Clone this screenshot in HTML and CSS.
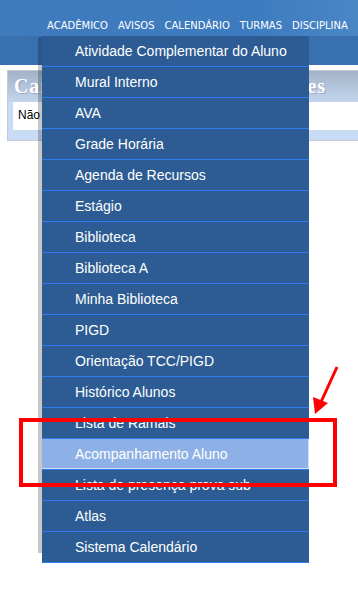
FILE: index.html
```html
<!DOCTYPE html>
<html lang="pt-BR">
<head>
    <meta charset="UTF-8">
    <meta name="viewport" content="width=device-width, initial-scale=1.0">
    <title>Portal Acadêmico</title>
    <link rel="stylesheet" href="styles.css">
</head>
<body>
    <div class="header">
        <div class="header-top">
            <ul class="nav">
                <li>Acadêmico</li>
                <li>Avisos</li>
                <li>Calendário</li>
                <li>Turmas</li>
                <li>Disciplina</li>
            </ul>
        </div>
        <div class="header-band"></div>
    </div>

    <div class="box">
        <div class="box-title">Caixa de Mensagens Importantes</div>
        <div class="box-body">
            <div class="box-row">Não há mensagens.</div>
        </div>
    </div>

    <!-- dropdown do menu ACADÊMICO -->
    <ul class="dropdown">
        <li>Atividade Complementar do Aluno</li>
        <li>Mural Interno</li>
        <li>AVA</li>
        <li>Grade Horária</li>
        <li>Agenda de Recursos</li>
        <li>Estágio</li>
        <li>Biblioteca</li>
        <li>Biblioteca A</li>
        <li>Minha Biblioteca</li>
        <li>PIGD</li>
        <li>Orientação TCC/PIGD</li>
        <li>Histórico Alunos</li>
        <li>Lista de Ramais</li>
        <li class="active">Acompanhamento Aluno</li>
        <li>Lista de presença prova sub</li>
        <li>Atlas</li>
        <li>Sistema Calendário</li>
    </ul>

    <!-- marcação em vermelho -->
    <svg class="markup" width="358" height="591" viewBox="0 0 358 591">
        <rect x="21" y="420" width="314" height="65" fill="none" stroke="#f00" stroke-width="4"/>
        <line x1="337" y1="367" x2="321" y2="402" stroke="#f00" stroke-width="3"/>
        <polygon points="315,414 313,397 328,403" fill="#f00"/>
    </svg>
</body>
</html>
```

FILE: styles.css
```css
body {
    margin: 0;
    background: #fff;
    font-family: "Liberation Sans", Arial, sans-serif;
    position: relative;
    height: 591px;
    overflow: hidden;
}
.header {
    height: 65px;
}
.header-top {
    height: 36px;
    background: linear-gradient(to right, #3f7bbd, #3d7bc0 70%, #4a86c6);
    display: flex;
    align-items: flex-end;
}
.header-band {
    height: 29px;
    background: #3970b0;
}
.nav {
    list-style: none;
    margin: 0;
    padding: 0 0 3px 47px;
    display: flex;
    gap: 10px;
    white-space: nowrap;
}
.nav li {
    color: #fff;
    font-family: "DejaVu Sans", Tahoma, sans-serif;
    font-size: 10px;
    text-transform: uppercase;
    line-height: 14px;
}

.box {
    margin: 5px 0 0 7px;
    border: 1px solid #c4cbd6;
    border-right: none;
    background: #c8dcf5;
    padding-bottom: 10px;
}
.box-title {
    height: 31px;
    padding-left: 6px;
    background: linear-gradient(#a2b3c8, #c3d5ec);
    color: #fff;
    font-family: "Liberation Serif", "Times New Roman", serif;
    font-weight: bold;
    font-size: 20px;
    line-height: 31px;
    letter-spacing: 0.9px;
    text-shadow: 1px 1px 0 rgba(120, 100, 140, 0.35);
    white-space: nowrap;
}
.box-body {
    padding-left: 5px;
}
.box-row {
    background: #fff;
    height: 28px;
    line-height: 26px;
    padding-left: 5px;
    font-size: 12px;
    color: #000;
}

.dropdown {
    position: absolute;
    top: 36px;
    left: 42px;
    width: 267px;
    margin: 0;
    padding: 0;
    list-style: none;
    background: #2c5c93;
}
.dropdown::before {
    content: "";
    position: absolute;
    left: -4px;
    top: 1px;
    bottom: 10px;
    width: 4px;
    background: rgba(0, 0, 0, 0.22);
}
.dropdown li {
    height: 30px;
    line-height: 30px;
    padding-left: 33px;
    border-bottom: 1px solid #2f7bf0;
    color: #fff;
    font-size: 14px;
    white-space: nowrap;
}
.dropdown li.active {
    background: #8db1e6;
    box-shadow: inset -1px -1px 0 #cfe0f8;
}

.markup {
    position: absolute;
    left: 0;
    top: 0;
    pointer-events: none;
}
```
